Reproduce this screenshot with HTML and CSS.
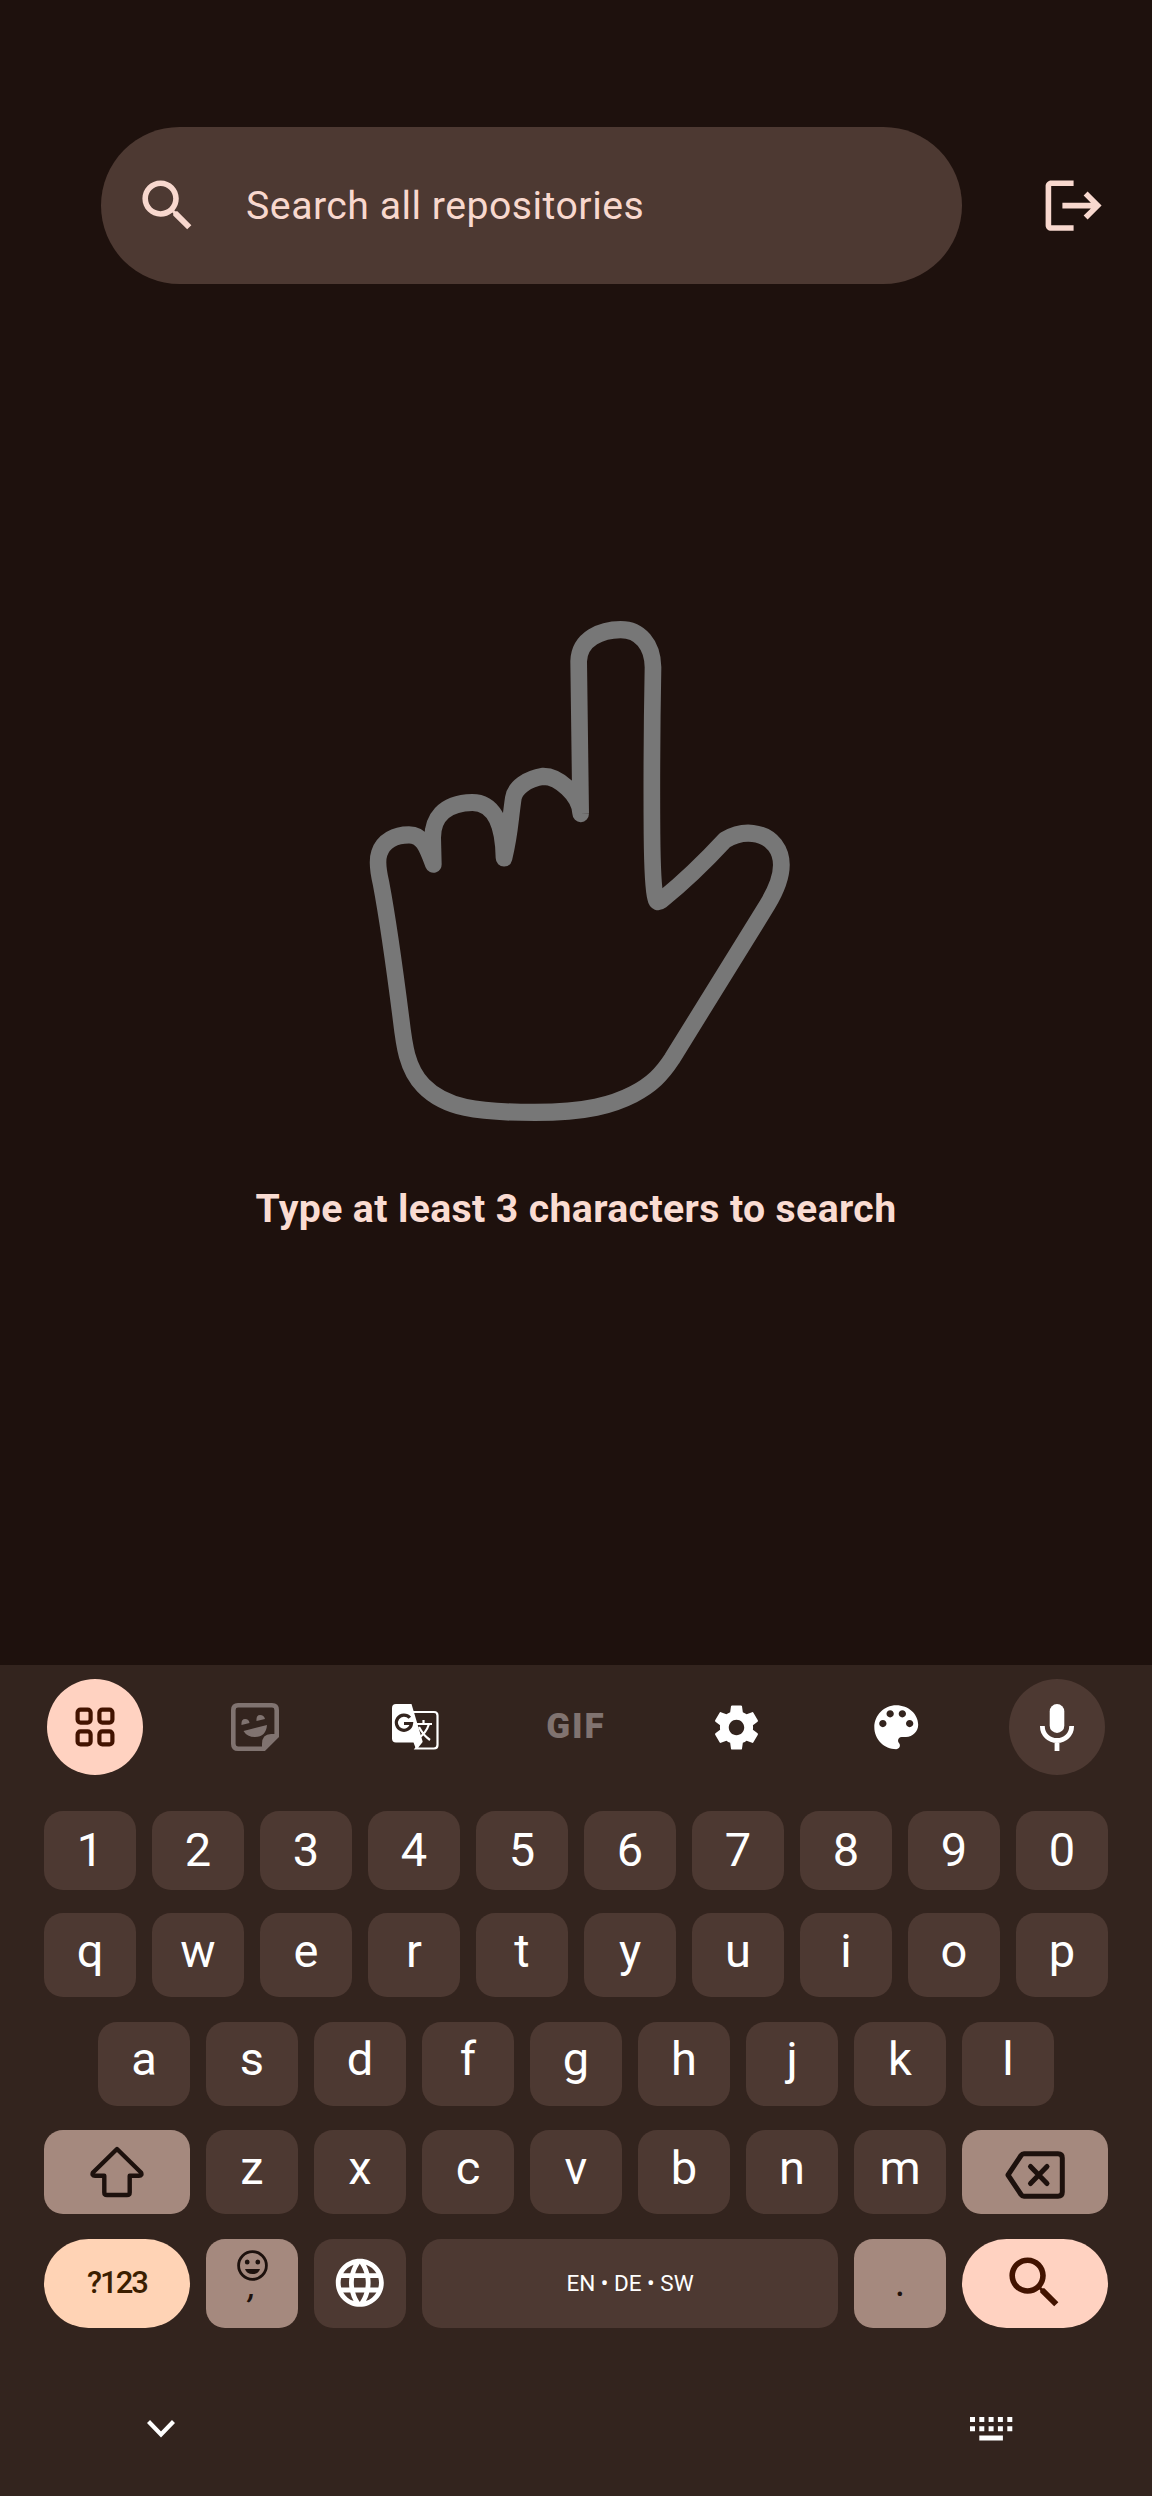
FILE: index.html
```
<!DOCTYPE html>
<html lang="en">
<head>
<meta charset="utf-8">
<title>Search repositories</title>
<link rel="stylesheet" href="styles.css">
</head>
<body>
<div class="screen">
  <header class="topbar">
    <div class="search">
      <svg class="icon" viewBox="0 0 24 24"><path d="M15.5 14h-.79l-.28-.27C15.41 12.59 16 11.11 16 9.5 16 5.91 13.09 3 9.5 3S3 5.91 3 9.5 5.91 16 9.5 16c1.61 0 3.09-.59 4.23-1.57l.27.28v.79l5 4.99L20.49 19l-4.99-5zm-6 0C7.01 14 5 11.99 5 9.5S7.01 5 9.5 5 14 7.01 14 9.5 11.99 14 9.5 14z"/></svg>
      <span class="placeholder">Search all repositories</span>
    </div>
    <svg class="icon logout" viewBox="0 0 24 24"><path d="M17 7l-1.41 1.41L18.17 11H8v2h10.17l-2.58 2.58L17 17l5-5zM4 5h8V3H4c-1.1 0-2 .9-2 2v14c0 1.1.9 2 2 2h8v-2H4V5z"/></svg>
  </header>

  <main class="empty">
    <svg class="hand" viewBox="0 0 1380 1620" preserveAspectRatio="none"><path transform="scale(1 1.0332)" d="M692 620L686 178C688 112 755 86 812 86C870 86 908 130 909 195C906 350 905 550 906 680C907 790 911 845 917 866Q920 882 934 872C990 828 1060 765 1125 697C1180 665 1243 673 1275 712C1310 757 1294 818 1252 885L966 1332C935 1378 905 1407 850 1435C790 1465 710 1488 555 1488C380 1488 285 1475 220 1410C170 1360 162 1290 153 1215C130 1040 113 925 93 822C84 785 80 757 88 735C100 700 135 682 177 682C217 682 230 715 250 767L248 690C248 640 275 590 367 588C425 588 460 640 462 749C480 680 480 640 490 575C495 545 530 520 580 512C625 512 690 565 692 620Z"/></svg>
    <p class="hint">Type at least 3 characters to search</p>
  </main>

  <section class="keyboard">
    <div class="tools">
      <span class="tool round accent"><svg width="40" height="40" viewBox="0 0 40 40" fill="none" stroke="#421300" stroke-width="4.2"><rect x="2.6" y="2.6" width="13" height="13" rx="3"/><rect x="24.4" y="2.6" width="13" height="13" rx="3"/><rect x="2.6" y="24.4" width="13" height="13" rx="3"/><rect x="24.4" y="24.4" width="13" height="13" rx="3"/></svg></span>
      <span class="tool"><svg width="48" height="48" viewBox="0 0 48 48"><path fill="none" stroke="#807370" stroke-width="4.6" d="M7 2.3H41Q45.7 2.3 45.7 7V33L33 45.7H7Q2.3 45.7 2.3 41V7Q2.3 2.3 7 2.3Z"/><path fill="#807370" d="M46 31V34L34 46H31V41Q31 31 40 31ZM10.500 22Q10 16 14 16T18.500 20ZM25.500 18Q25 12 29 12T34 16ZM12.500 28L36 22Q35 34 24 34Q16 34 12.500 28Z"/></svg></span>
      <span class="tool"><svg width="47" height="46" viewBox="0 0 47 46"><path fill="none" stroke="#fff" stroke-width="2.2" d="M20 8H42Q45.500 8 45.500 11.500V41Q45.500 44.500 42 44.500H24L30 37"/><path fill="#fff" d="M4 0H19.500L30.500 37L24 45L21.500 38.500H4Q0 38.500 0 34.500V4Q0 0 4 0Z"/><path fill="none" stroke="#33241e" stroke-width="3.200" d="M17.800 13.800A7.600 7.600 0 1 0 19.500 19.500H12"/><path fill="none" stroke="#fff" stroke-width="2.200" d="M24 20H40M31.500 16V20M37 20Q34 30 25 35M27 23Q31 31 38 36"/></svg></span>
      <span class="tool gif">GIF</span>
      <span class="tool"><svg width="53" height="53" viewBox="0 0 24 24"><path fill="#fff" d="M19.430 12.980c.04-.32.07-.64.07-.98s-.03-.66-.07-.98l2.110-1.650c.19-.15.24-.42.12-.64l-2-3.460c-.12-.22-.39-.3-.61-.22l-2.490 1c-.52-.4-1.080-.73-1.690-.98l-.38-2.650C14.460 2.180 14.250 2 14 2h-4c-.25 0-.46.18-.49.42l-.38 2.650c-.61.25-1.170.59-1.690.98l-2.490-1c-.23-.09-.49 0-.61.22l-2 3.460c-.13.22-.07.49.12.64l2.110 1.650c-.04.32-.07.65-.07.98s.03.66.07.98l-2.110 1.650c-.19.15-.24.42-.12.64l2 3.460c.12.22.39.3.61.22l2.490-1c.52.4 1.080.73 1.690.98l.38 2.650c.03.24.24.42.49.42h4c.25 0 .46-.18.49-.42l.38-2.650c.61-.25 1.170-.59 1.690-.98l2.490 1c.23.09.49 0 .61-.22l2-3.460c.12-.22.07-.49-.12-.64l-2.110-1.650zM12 15.500c-1.930 0-3.500-1.570-3.500-3.500s1.570-3.500 3.500-3.500 3.500 1.570 3.500 3.500-1.570 3.500-3.500 3.500z"/></svg></span>
      <span class="tool"><svg width="58.500" height="58.500" viewBox="0 0 24 24"><path fill="#fff" d="M12 3c-4.970 0-9 4.030-9 9s4.030 9 9 9c.83 0 1.500-.67 1.500-1.500 0-.39-.15-.74-.39-1.010-.23-.26-.38-.61-.38-.99 0-.83.67-1.500 1.500-1.500H16c2.760 0 5-2.240 5-5 0-4.420-4.030-8-9-8zm-5.500 9c-.83 0-1.500-.67-1.500-1.500S5.670 9 6.500 9 8 9.670 8 10.500 7.330 12 6.500 12zm3-4C8.670 8 8 7.330 8 6.500S8.670 5 9.500 5s1.500.67 1.500 1.500S10.330 8 9.500 8zm5 0c-.83 0-1.500-.67-1.500-1.500S13.670 5 14.500 5s1.500.67 1.500 1.500S15.330 8 14.500 8zm3 4c-.83 0-1.500-.67-1.500-1.500S16.670 9 17.500 9s1.500.67 1.500 1.500-.67 1.500-1.500 1.500z"/></svg></span>
      <span class="tool round"><svg width="34" height="47" viewBox="0 0 34 47"><rect x="9.700" y="0" width="14.600" height="29" rx="7.300" fill="#fff"/><path fill="none" stroke="#fff" stroke-width="4.800" d="M2.400 22V22.500A14.600 14 0 0 0 31.600 22.500V22M17 36V47"/></svg></span>
    </div>

    <div class="rows">
      <div class="row numbers"><b class="key">1</b><b class="key">2</b><b class="key">3</b><b class="key">4</b><b class="key">5</b><b class="key">6</b><b class="key">7</b><b class="key">8</b><b class="key">9</b><b class="key">0</b></div>
      <div class="row"><b class="key">q</b><b class="key">w</b><b class="key">e</b><b class="key">r</b><b class="key">t</b><b class="key">y</b><b class="key">u</b><b class="key">i</b><b class="key">o</b><b class="key">p</b></div>
      <div class="row"><b class="key">a</b><b class="key">s</b><b class="key">d</b><b class="key">f</b><b class="key">g</b><b class="key">h</b><b class="key">j</b><b class="key">k</b><b class="key">l</b></div>
      <div class="row">
        <span class="key wide muted"><svg width="54" height="52" viewBox="0 0 54 52" fill="none" stroke="#1d110d" stroke-width="4.400" stroke-linejoin="round"><path d="M27 3L3 26.500Q1.500 29.700 5 29.700H14.300V46.500Q14.300 49 17 49H37Q39.700 49 39.700 46.500V29.700H49Q52.500 29.700 51 26.500Z"/></svg></span>
        <b class="key">z</b><b class="key">x</b><b class="key">c</b><b class="key">v</b><b class="key">b</b><b class="key">n</b><b class="key">m</b>
        <span class="key wide muted backspace"><svg width="60" height="48" viewBox="0 0 60 48" fill="none" stroke="#1d110d" stroke-width="5" stroke-linejoin="round" stroke-linecap="round"><path d="M3 24L16 4.500Q17.200 2.800 19 2.800H53Q57.300 2.800 57.300 7V41Q57.300 45.200 53 45.200H19Q17.200 45.200 16 43.500Z"/><path d="M25.500 15.500L42 32.500M42 15.500L25.500 32.500"/></svg></span>
      </div>
      <div class="row bottom">
        <span class="key wide symbols">?123</span>
        <span class="key muted comma"><svg width="31" height="31" viewBox="0 0 31 31"><circle cx="15.500" cy="15.500" r="13.900" fill="none" stroke="#1d110d" stroke-width="2.800"/><ellipse cx="10.200" cy="12" rx="2.400" ry="2.500" fill="#1d110d"/><ellipse cx="20.800" cy="12" rx="2.400" ry="2.500" fill="#1d110d"/><path fill="#1d110d" d="M8 19H23Q21.500 24 15.500 24T8 19Z"/></svg><span>,</span></span>
        <span class="key"><svg width="57.600" height="57.600" viewBox="0 0 24 24"><path fill="#fff" d="M11.990 2C6.470 2 2 6.480 2 12s4.470 10 9.990 10C17.520 22 22 17.520 22 12S17.520 2 11.990 2zm6.930 6h-2.950c-.32-1.250-.78-2.450-1.380-3.560 1.840.63 3.370 1.910 4.330 3.560zM12 4.040c.83 1.200 1.480 2.530 1.910 3.960h-3.820c.43-1.430 1.080-2.760 1.910-3.960zM4.260 14C4.100 13.360 4 12.690 4 12s.1-1.360.26-2h3.380c-.08.66-.14 1.320-.14 2s.06 1.340.14 2H4.260zm.82 2h2.950c.32 1.250.78 2.450 1.380 3.560-1.840-.63-3.370-1.900-4.330-3.560zm2.950-8H5.080c.96-1.660 2.490-2.930 4.330-3.560C8.810 5.550 8.350 6.750 8.030 8zM12 19.960c-.83-1.200-1.480-2.530-1.910-3.960h3.820c-.43 1.430-1.080 2.760-1.910 3.960zM14.340 14H9.660c-.09-.66-.16-1.320-.16-2s.07-1.350.16-2h4.680c.09.65.16 1.320.16 2s-.07 1.340-.16 2zm.25 5.560c.6-1.110 1.060-2.310 1.380-3.560h2.950c-.96 1.650-2.490 2.930-4.330 3.560zM16.360 14c.08-.66.14-1.320.14-2s-.06-1.340-.14-2h3.380c.16.64.26 1.310.26 2s-.1 1.360-.26 2h-3.380z"/></svg></span>
        <span class="key space">EN • DE • SW</span>
        <span class="key muted period">.</span>
        <span class="key wide enter"><svg class="icon" viewBox="0 0 24 24"><path d="M15.500 14h-.79l-.28-.27C15.410 12.590 16 11.110 16 9.500 16 5.910 13.090 3 9.500 3S3 5.910 3 9.500 5.910 16 9.500 16c1.610 0 3.090-.59 4.230-1.570l.27.28v.79l5 4.990L20.490 19l-4.990-5zm-6 0C7.010 14 5 11.990 5 9.500S7.010 5 9.500 5 14 7.010 14 9.500 11.990 14 9.500 14z"/></svg></span>
      </div>
    </div>

    <div class="navbar">
      <svg width="28" height="18" viewBox="0 0 28 18"><path fill="none" stroke="#fff" stroke-width="4.200" d="M1.500 1.500L14 14.500L26.500 1.500"/></svg>
      <svg width="43" height="24" viewBox="0 0 43 24" fill="#fff"><path d="M0 0h5v5h-5zM9.300 0h5v5h-5zM18.600 0h5v5h-5zM27.900 0h5v5h-5zM37.300 0h5v5h-5zM0 9.200h5v5h-5zM9.300 9.200h5v5h-5zM18.600 9.200h5v5h-5zM27.900 9.200h5v5h-5zM37.300 9.200h5v5h-5zM9.300 18.600h23.600v5h-23.600z"/></svg>
    </div>
  </section>
</div>
</body>
</html>
```

FILE: styles.css
```
* { box-sizing: border-box; }
body { margin: 0; background: #1e110d; font-family: Roboto, "Liberation Sans", sans-serif; }
svg { display: block; flex: none; }
.screen { width: 1152px; height: 2496px; display: flex; flex-direction: column; overflow: hidden; }

.topbar { display: flex; align-items: center; padding: 127px 45px 0 101px; justify-content: space-between; }
.search { width: 861px; height: 157px; border-radius: 79px; background: #4d3932; display: flex; align-items: center; padding-left: 33.4px; }
.icon { width: 67.2px; height: 67.2px; fill: #f8d8ce; }
.placeholder { margin-left: 44.5px; font-size: 39.2px; line-height: 46px; letter-spacing: 0.5px; color: #f8d8ce; white-space: nowrap; }

.empty { flex: 1; display: flex; flex-direction: column; align-items: center; padding-top: 316px; }
.hand { width: 460px; height: 540px; fill: none; stroke: #777; stroke-width: 50; stroke-linejoin: round; stroke-linecap: round; margin-left: 8px; }
.hint { margin: 45.5px 0 0; font-size: 39.2px; line-height: 46px; font-weight: 700; letter-spacing: 0.37px; color: #fadcd2; white-space: nowrap; }

.keyboard { height: 831px; background: #33241e; }
.tools { height: 124px; padding: 14px 47px 0; display: flex; justify-content: space-between; }
.tool { width: 96px; height: 96px; display: flex; align-items: center; justify-content: center; }
.round { border-radius: 50%; background: #4d3932; }
.accent { background: #ffd2c1; }
.gif { font: 900 35px/96px Roboto, sans-serif; letter-spacing: 2px; color: #807370; }

.rows { padding: 22px 44px 0; display: flex; flex-direction: column; gap: 24.5px; }
.row { display: flex; gap: 16px; justify-content: center; height: 84px; }
.numbers { height: 79px; margin-bottom: -1.5px; }
.bottom { height: 89px; }
.key { width: 92px; height: 100%; border-radius: 19px; background: #4d3932; color: #fff; display: flex; align-items: center; justify-content: center; font-weight: 400; font-size: 47px; line-height: 50px; padding-bottom: 9px; }
.numbers .key { padding-bottom: 2px; }
span.key { padding: 0; }
.wide { width: 146px; }
.muted { background: #a5897e; color: #1d110d; }
span.backspace { padding-top: 5px; }
.symbols { border-radius: 45px; background: #ffd3b5; color: #3b1e00; font-size: 31px; font-weight: 500; letter-spacing: -2px; }
.comma { flex-direction: column; justify-content: flex-start; }
.comma svg { margin-top: 11px; }
.comma span { font-size: 32px; line-height: 32px; font-weight: 500; font-style: italic; margin-top: -10px; }
.space { width: 416px; font-size: 22.5px; }
.period { font-size: 40px; }
.enter { border-radius: 45px; background: #ffd2c1; }
.enter .icon { fill: #421300; }

.navbar { display: flex; justify-content: space-between; align-items: center; padding: 89px 139px 0 147px; }
```
